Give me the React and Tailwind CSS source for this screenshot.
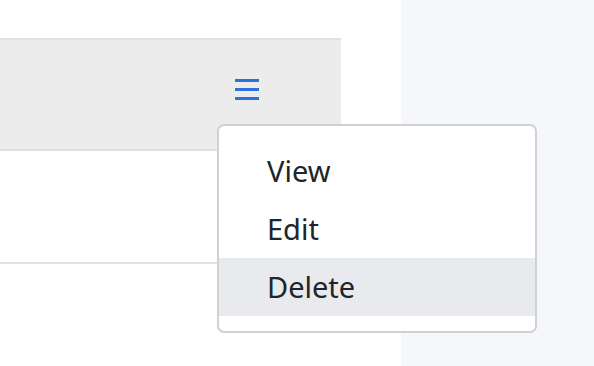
export default function App() {
  return (
    <div className="relative flex h-[366px] w-[594px] overflow-hidden bg-white" style={{ fontFamily: '"Noto Sans", "Open Sans", sans-serif' }}>
      <div className="w-[401px] shrink-0 bg-white pt-[38px]">
        <div className="w-[341px]">
          <div className="flex h-[113px] items-start justify-end border-y-2 border-[#dee2e6] bg-[#ececec] pr-[82px] pt-[39px]">
            <button className="flex h-[21px] w-[24px] flex-col justify-between">
              <span className="block h-[3px] w-[24px] bg-[#2f71dc]"></span>
              <span className="block h-[3px] w-[24px] bg-[#2f71dc]"></span>
              <span className="block h-[3px] w-[24px] bg-[#2f71dc]"></span>
            </button>
          </div>
          <div className="h-[113px] border-b-2 border-[#dee2e6]"></div>
        </div>
      </div>
      <div className="flex-1 bg-[#f6f7fb]"></div>
      <div className="absolute left-[217px] top-[124px] w-[320px] rounded-[7px] border-2 border-[#d0d1d3] bg-white pt-[16px] pb-[15px]">
        <div className="flex h-[58px] items-center pl-[48px] text-[29px] text-[#212529]">View</div>
        <div className="flex h-[58px] items-center pl-[48px] text-[29px] text-[#212529]">Edit</div>
        <div className="flex h-[58px] items-center bg-[#e9eaee] pl-[48px] text-[29px] text-[#212529]">Delete</div>
      </div>
    </div>
  );
}
